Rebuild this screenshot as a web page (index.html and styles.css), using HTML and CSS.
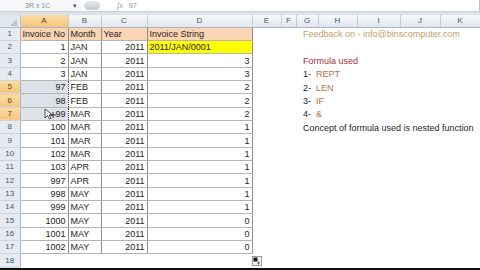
FILE: index.html
```html
<!DOCTYPE html>
<html lang="en">

<head>
  <title>Invoice String</title>
  <meta charset="utf-8">
  <link rel="stylesheet" href="styles.css">
</head>

<body>
  <div id="window">
    <!-- formula bar, cut off at the top of the capture -->
    <div class="fbar">
      <div class="namebox"><span class="ref">3R x 1C</span><span class="drop">&#9662;</span></div>
      <div class="grip"></div>
      <div class="fx">fx</div>
      <div class="formula">97</div>
    </div>
    <div class="band"></div>

    <table class="sheet">
      <colgroup>
        <col class="w-rh"><col class="w-a"><col class="w-b"><col class="w-c"><col class="w-d">
        <col class="w-e"><col class="w-f"><col class="w-g"><col class="w-h"><col class="w-i">
        <col class="w-j"><col class="w-k">
      </colgroup>
      <tr class="heads">
        <td class="corner"><svg width="9" height="9" viewBox="0 0 9 9"><path d="M8 1 L8 8 L1 8 Z" fill="#b9c2cf"/></svg></td>
        <td class="ch on">A</td><td class="ch">B</td><td class="ch">C</td><td class="ch">D</td>
        <td class="ch">E</td><td class="ch">F</td><td class="ch">G</td><td class="ch">H</td>
        <td class="ch">I</td><td class="ch">J</td><td class="ch last">K</td>
      </tr>
      <tr>
        <td class="rh">1</td>
        <td class="b hd">Invoice No</td><td class="b hd">Month</td><td class="b hd">Year</td><td class="b hd">Invoice String</td>
        <td></td><td></td>
        <td colspan="5" class="note feedback">Feedback on - info@binscomputer.com</td>
      </tr>
      <tr>
        <td class="rh">2</td>
        <td class="b num">1</td><td class="b">JAN</td><td class="b num">2011</td><td class="b yel">2011/JAN/0001</td>
        <td></td><td></td><td colspan="5"></td>
      </tr>
      <tr>
        <td class="rh">3</td>
        <td class="b num">2</td><td class="b">JAN</td><td class="b num">2011</td><td class="b num">3</td>
        <td></td><td></td>
        <td colspan="5" class="note title">Formula used</td>
      </tr>
      <tr>
        <td class="rh">4</td>
        <td class="b num">3</td><td class="b">JAN</td><td class="b num">2011</td><td class="b num">3</td>
        <td></td><td></td>
        <td colspan="5" class="note"><span class="step">1-</span><span class="fn">REPT</span></td>
      </tr>
      <tr>
        <td class="rh on">5</td>
        <td class="b num sel">97</td><td class="b">FEB</td><td class="b num">2011</td><td class="b num">2</td>
        <td></td><td></td>
        <td colspan="5" class="note"><span class="step">2-</span><span class="fn">LEN</span></td>
      </tr>
      <tr>
        <td class="rh on">6</td>
        <td class="b num sel">98</td><td class="b">FEB</td><td class="b num">2011</td><td class="b num">2</td>
        <td></td><td></td>
        <td colspan="5" class="note"><span class="step">3-</span><span class="fn">IF</span></td>
      </tr>
      <tr>
        <td class="rh on">7</td>
        <td class="b num sel cursor-cell">99
          <svg class="cursor" width="12" height="12" viewBox="0 0 12 12">
            <path d="M1 1 L1 10 L3.5 7.5 L5.5 11 L7 10.2 L5 7 L8.5 7 Z" fill="#fff" stroke="#222" stroke-width="0.8"/>
            <path d="M9 4 L9 10 M6 7 L12 7" stroke="#222" stroke-width="0.9"/>
          </svg>
        </td>
        <td class="b">MAR</td><td class="b num">2011</td><td class="b num">2</td>
        <td></td><td></td>
        <td colspan="5" class="note"><span class="step">4-</span><span class="fn">&amp;</span></td>
      </tr>
      <tr>
        <td class="rh">8</td>
        <td class="b num">100</td><td class="b">MAR</td><td class="b num">2011</td><td class="b num">1</td>
        <td></td><td></td>
        <td colspan="5" class="note">Concept of formula used is nested function</td>
      </tr>
      <tr>
        <td class="rh">9</td>
        <td class="b num">101</td><td class="b">MAR</td><td class="b num">2011</td><td class="b num">1</td>
        <td></td><td></td><td colspan="5"></td>
      </tr>
      <tr>
        <td class="rh">10</td>
        <td class="b num">102</td><td class="b">MAR</td><td class="b num">2011</td><td class="b num">1</td>
        <td></td><td></td><td colspan="5"></td>
      </tr>
      <tr>
        <td class="rh">11</td>
        <td class="b num">103</td><td class="b">APR</td><td class="b num">2011</td><td class="b num">1</td>
        <td></td><td></td><td colspan="5"></td>
      </tr>
      <tr>
        <td class="rh">12</td>
        <td class="b num">997</td><td class="b">APR</td><td class="b num">2011</td><td class="b num">1</td>
        <td></td><td></td><td colspan="5"></td>
      </tr>
      <tr>
        <td class="rh">13</td>
        <td class="b num">998</td><td class="b">MAY</td><td class="b num">2011</td><td class="b num">1</td>
        <td></td><td></td><td colspan="5"></td>
      </tr>
      <tr>
        <td class="rh">14</td>
        <td class="b num">999</td><td class="b">MAY</td><td class="b num">2011</td><td class="b num">1</td>
        <td></td><td></td><td colspan="5"></td>
      </tr>
      <tr>
        <td class="rh">15</td>
        <td class="b num">1000</td><td class="b">MAY</td><td class="b num">2011</td><td class="b num">0</td>
        <td></td><td></td><td colspan="5"></td>
      </tr>
      <tr>
        <td class="rh">16</td>
        <td class="b num">1001</td><td class="b">MAY</td><td class="b num">2011</td><td class="b num">0</td>
        <td></td><td></td><td colspan="5"></td>
      </tr>
      <tr>
        <td class="rh">17</td>
        <td class="b num">1002</td><td class="b">MAY</td><td class="b num">2011</td><td class="b num">0</td>
        <td></td><td></td><td colspan="5"></td>
      </tr>
      <tr>
        <td class="rh">18</td>
        <td></td><td></td><td></td>
        <td class="paste-cell">
          <svg class="paste" width="10" height="10" viewBox="0 0 10 10">
            <rect x="0.5" y="0.5" width="9" height="9" fill="#f4f4f4" stroke="#9a9a9a"/>
            <rect x="1.5" y="1.5" width="4" height="4" fill="#1b1b1b"/>
            <path d="M5 7 L8 7 M6.5 5.5 L6.5 8.5" stroke="#555" stroke-width="0.8"/>
          </svg>
        </td>
        <td></td><td></td><td colspan="5"></td>
      </tr>
    </table>
    <div class="bottom"></div>
  </div>
</body>

</html>
```

FILE: styles.css
```css
* {
  box-sizing: border-box;
}

body {
  margin: 0;
  overflow: hidden;
  background-color: white;
  font-family: "Liberation Sans", Arial, sans-serif;
}

#window {
  width: 480px;
  height: 270px;
  display: flex;
  flex-flow: column nowrap;
  overflow: hidden;
}

/* formula bar strip */
.fbar {
  height: 11px;
  flex-shrink: 0;
  display: flex;
  align-items: center;
  background-color: white;
  border-right: 1px solid #b8c0cc;
  font-size: 7px;
  color: #8a8f98;
  white-space: nowrap;
}

.namebox {
  width: 82px;
  padding-left: 25px;
  display: flex;
  align-items: center;
  background-color: #f6f7f9;
  height: 100%;
}

.ref {
  width: 48px;
}

.drop {
  font-size: 7px;
  color: #555;
}

.grip {
  width: 16px;
  height: 9px;
  margin-left: 2px;
  border-radius: 5px;
  background: linear-gradient(#e6e9ee, #c4cad3);
}

.fx {
  margin-left: 17px;
  font-style: italic;
  font-family: "Liberation Serif", serif;
  font-size: 8px;
  color: #9aa0a8;
}

.formula {
  margin-left: 6px;
  color: #8a8f98;
}

.band {
  height: 4px;
  flex-shrink: 0;
  background-color: #dde2e9;
  border-top: 1px solid #c9d0da;
}

/* the grid */
.sheet {
  width: 480px;
  table-layout: fixed;
  border-collapse: collapse;
  font-size: 9px;
  color: #1e1e1e;
}

.w-rh { width: 20px; }
.w-a { width: 48px; }
.w-b { width: 33px; }
.w-c { width: 46px; }
.w-d { width: 105px; }
.w-e { width: 29px; }
.w-f { width: 15px; }
.w-g { width: 22px; }
.w-h { width: 39px; }
.w-i { width: 43px; }
.w-j { width: 40px; }
.w-k { width: 40px; }

.sheet tr {
  height: 13.35px;
}

.sheet td {
  padding: 0 2px;
  white-space: nowrap;
  overflow: hidden;
  vertical-align: bottom;
  line-height: 12px;
}

.sheet tr.heads {
  height: 12px;
}

.corner {
  background-color: #e3e8ee;
  border-right: 1px solid #b3bfcd;
  border-bottom: 1px solid #b3bfcd;
}

.corner svg {
  display: block;
  margin-left: auto;
}

.ch {
  text-align: center;
  background: linear-gradient(#f6f8fa, #e1e6ec);
  border-right: 1px solid #c4ccd7;
  border-bottom: 1px solid #a9b6c6;
  color: #4a586c;
  font-size: 8px;
}

.sheet td.ch {
  vertical-align: middle;
  line-height: 11px;
}

.ch.last {
  border-right: none;
}

.rh {
  text-align: center;
  background-color: #e6ebf1;
  border-right: 1px solid #a9b6c6;
  border-bottom: 1px solid #cdd5df;
  color: #3f5676;
  font-size: 8px;
}

.sheet td.rh {
  padding: 0;
}

.ch.on,
.rh.on {
  background: linear-gradient(#fbdca4, #f6c47c);
  color: #5a4326;
}

/* bordered data range A1:D17 */
.b {
  border-right: 1px solid #8e8e8e;
  border-bottom: 1px solid #b4b4b4;
}

.num {
  text-align: right;
}

.hd {
  background-color: #fcd5b4;
}

.yel {
  background-color: #ffff00;
}

.sel {
  background-color: #dde1e8;
}

.sheet td.sel {
  border-right: 1px dotted #3a3a3a;
}

.cursor-cell,
.paste-cell {
  position: relative;
}

.cursor {
  position: absolute;
  left: 23px;
  top: 0px;
}

.paste {
  position: absolute;
  right: -10px;
  top: 2px;
}

.sheet td.paste-cell {
  overflow: visible;
}

/* notes to the right of the data */
.sheet td.note {
  padding-left: 7px;
}

.feedback {
  color: #c0a06c;
}

.title {
  color: #a02d3c;
}

.step {
  display: inline-block;
  width: 13px;
  color: #2a2a2a;
}

.fn {
  color: #c0713f;
}

.bottom {
  height: 3px;
  background-color: #111;
  flex-shrink: 0;
}
```
